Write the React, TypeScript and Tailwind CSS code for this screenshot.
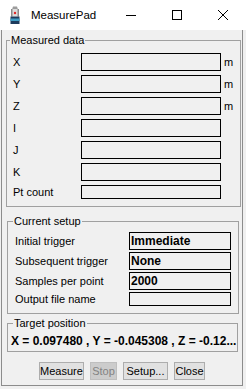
import React from 'react'

const measured = ['X', 'Y', 'Z', 'I', 'J', 'K']

const setup = [
  { label: 'Initial trigger', value: 'Immediate' },
  { label: 'Subsequent trigger', value: 'None' },
  { label: 'Samples per point', value: '2000' },
]

function AppIcon() {
  return (
    <svg width="10" height="18" viewBox="0 0 10 18">
      <path d="M3 0.5 h4 l1 3 h-6 z" fill="#9c9c9c" />
      <rect x="1" y="3" width="8" height="7.5" fill="#dcdcdc" />
      <rect x="1" y="3" width="1.5" height="7.5" fill="#8a8a8a" />
      <rect x="7.5" y="3" width="1.5" height="7.5" fill="#8a8a8a" />
      <circle cx="5" cy="7" r="1.2" fill="#e02525" />
      <rect x="0.5" y="10.5" width="9" height="7.5" fill="#1d3b5c" />
      <rect x="0.5" y="12.5" width="9" height="2.5" fill="#3d9cc4" />
    </svg>
  )
}

function Group({ title, className, children }: { title: string; className: string; children: React.ReactNode }) {
  return (
    <div className={`relative border border-[#a0a0a0] ${className}`}>
      <span className="absolute -top-[7px] bg-[#f0f0f0] px-[1px] leading-[13px] whitespace-nowrap">{title}</span>
      {children}
    </div>
  )
}

export default function App() {
  return (
    <div className="w-[246px] h-[389px] overflow-hidden bg-[#f0f0f0] text-[11px] text-black font-['Liberation_Sans',Arial,sans-serif]">
      {/* title bar */}
      <div className="h-[30px] bg-white flex items-center">
        <div className="ml-[10px] mr-[11px] flex">
          <AppIcon />
        </div>
        <span className="text-[11.5px] leading-[14px]">MeasurePad</span>
        <div className="ml-auto flex h-full">
          <div className="w-[46px] h-full flex items-center justify-center">
            <svg width="10" height="10" viewBox="0 0 10 10">
              <path d="M0 5.5 H10" stroke="#000" strokeWidth="1" />
            </svg>
          </div>
          <div className="w-[46px] h-full flex items-center justify-center">
            <svg width="10" height="10" viewBox="0 0 10 10">
              <rect x="0.5" y="0.5" width="9" height="9" fill="none" stroke="#000" strokeWidth="1" />
            </svg>
          </div>
          <div className="w-[46px] h-full flex items-center justify-center">
            <svg width="10" height="10" viewBox="0 0 10 10">
              <path d="M0 0 L10 10 M10 0 L0 10" stroke="#000" strokeWidth="1" />
            </svg>
          </div>
        </div>
      </div>

      {/* client frame */}
      <div className="ml-[1px] w-[242px] h-[356px] border-x border-b border-[#8c8c8c] flex flex-col">
        <Group title="Measured data" className="mt-[10px] ml-[4px] w-[235px] pt-[12px] pb-[7px] [&>span]:left-[3px]">
          <div className="flex flex-col gap-[4px]">
            {measured.map((m) => (
              <div key={m} className="flex items-center h-[18px]">
                <span className="w-[74px] pl-[6px]">{m}</span>
                <div className="w-[140px] h-full border border-black" />
                <span className="ml-[3px]">{['X', 'Y', 'Z'].includes(m) ? 'm' : ''}</span>
              </div>
            ))}
            <div className="flex items-center h-[14px]">
              <span className="w-[74px] pl-[6px]">Pt count</span>
              <div className="w-[140px] h-full border border-black" />
            </div>
          </div>
        </Group>

        <Group title="Current setup" className="mt-[14px] ml-[5px] w-[232px] pt-[10px] pb-[7px] [&>span]:left-[5px]">
          <div className="flex flex-col gap-[2px]">
            {setup.map((s) => (
              <div key={s.label} className="flex items-center h-[18px]">
                <span className="w-[121px] pl-[7px]">{s.label}</span>
                <div className="w-[102px] h-full border border-black flex items-center pl-[1px] font-bold text-[12px]">
                  {s.value}
                </div>
              </div>
            ))}
            <div className="flex items-center h-[14px]">
              <span className="w-[121px] pl-[7px]">Output file name</span>
              <div className="w-[102px] h-full border border-black" />
            </div>
          </div>
        </Group>

        <Group title="Target position" className="mt-[9px] ml-[5px] w-[231px] pt-[10px] pb-[3px] [&>span]:left-[5px]">
          <div className="pl-[3px] leading-[14px] font-bold text-[12px] whitespace-nowrap overflow-hidden">
            X = 0.097480 , Y = -0.045308 , Z = -0.12...
          </div>
        </Group>

        <div className="mt-[10px] flex justify-center gap-[6px]">
          <button className="w-[45px] h-[18px] bg-[#e1e1e1] border border-[#adadad] leading-[16px] text-center">Measure</button>
          <button className="w-[27px] h-[18px] bg-[#cccccc] border border-[#bfbfbf] text-[#838383] leading-[16px] text-center">Stop</button>
          <button className="w-[45px] h-[18px] bg-[#e1e1e1] border border-[#adadad] leading-[16px] text-center">Setup...</button>
          <button className="w-[31px] h-[18px] bg-[#e1e1e1] border border-[#adadad] leading-[16px] text-center">Close</button>
        </div>
      </div>
    </div>
  )
}
